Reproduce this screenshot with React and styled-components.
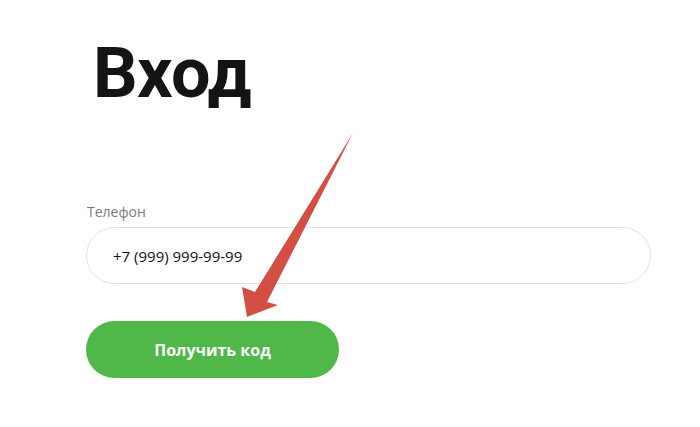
import React from "react";
import styled, { createGlobalStyle } from "styled-components";

const GlobalStyle = createGlobalStyle`
  html, body {
    margin: 0;
    padding: 0;
    background: #ffffff;
  }
  body {
    font-family: "Open Sans", "Noto Sans", sans-serif;
  }
`;

const Page = styled.div`
  position: relative;
  width: 700px;
  height: 427px;
  overflow: hidden;
  padding: 33px 0 0 86px;
  box-sizing: border-box;
`;

const Title = styled.h1`
  margin: 0 0 0 7px;
  font-family: Roboto, "Open Sans", sans-serif;
  font-weight: 700;
  font-size: 70px;
  line-height: 80px;
  letter-spacing: -0.6px;
  color: #141414;
`;

const Form = styled.form`
  display: flex;
  flex-direction: column;
  margin-top: 90px;
  width: 565px;
`;

const Label = styled.label`
  font-size: 14px;
  color: #7a7a7a;
  margin: 0 0 6px 1px;
  line-height: 18px;
`;

const PhoneInput = styled.input`
  height: 57px;
  box-sizing: border-box;
  border: 1px solid #e2e2e2;
  border-radius: 29px;
  padding: 0 26px;
  font-family: "Open Sans", sans-serif;
  font-size: 15px;
  color: #111;
  outline: none;
  background: #fff;
`;

const SubmitButton = styled.button`
  margin-top: 37px;
  width: 253px;
  height: 57px;
  border: none;
  border-radius: 29px;
  background: #4fb848;
  color: #fff;
  font-family: "Open Sans", sans-serif;
  font-weight: 700;
  font-size: 16px;
  cursor: pointer;
`;

const Arrow = styled.svg`
  position: absolute;
  left: 0;
  top: 0;
  pointer-events: none;
`;

export default function App() {
  return (
    <>
      <GlobalStyle />
      <Page>
        <Title>Вход</Title>
        <Form onSubmit={(e) => e.preventDefault()}>
          <Label htmlFor="phone">Телефон</Label>
          <PhoneInput id="phone" defaultValue="+7 (999) 999-99-99" />
          <SubmitButton type="submit">Получить код</SubmitButton>
        </Form>
        <Arrow width="700" height="427" viewBox="0 0 700 427">
          <polygon
            points="353,133 267,302 278,305 247,317 242,287 255,292"
            fill="#d44f43"
          />
        </Arrow>
      </Page>
    </>
  );
}
